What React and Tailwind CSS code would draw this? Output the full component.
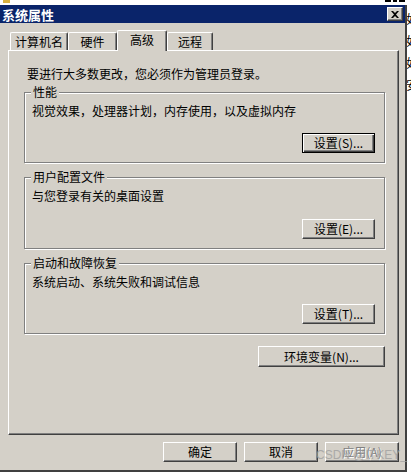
import React from "react";

const FONT = { fontFamily: '"SimSun","Noto Sans CJK SC","Noto Sans",sans-serif' };

function Btn({ children, w = "w-[73px]", def = false, disabled = false }) {
  return (
    <div
      className={
        "h-[20px] flex items-center justify-center text-[12px] leading-none bg-[#D4D0C8] " +
        w +
        " " +
        (def
          ? "border border-black shadow-[inset_1px_1px_0_#fff,inset_-1px_-1px_0_#404040,inset_-2px_-2px_0_#808080]"
          : "border border-t-white border-l-white border-r-[#404040] border-b-[#404040] shadow-[inset_-1px_-1px_0_#808080]") +
        (disabled ? " text-[#808080]" : " text-black")
      }
    >
      <span className={disabled ? "[text-shadow:1px_1px_0_#fff]" : ""}>{children}</span>
    </div>
  );
}

function Group({ label, desc, btn, h, def }) {
  return (
    <div
      className={
        "relative w-[361px] border border-[#808080] shadow-[inset_1px_1px_0_#fff,1px_1px_0_#fff] flex flex-col " +
        h
      }
    >
      <div className="absolute left-[6px] top-[-8px] px-[2px] bg-[#D4D0C8] text-[12px] leading-[14px] text-black">
        {label}
      </div>
      <div className="pl-[7px] pt-[10px] text-[12px] leading-[16px] text-black">{desc}</div>
      <div className="mt-auto pb-[9px] pr-[9px] flex justify-end">
        <Btn def={def}>{btn}</Btn>
      </div>
    </div>
  );
}

function Tab({ children, w, sel }) {
  return (
    <div
      className={
        "flex items-center justify-center text-[12px] text-black bg-[#D4D0C8] rounded-t-[2px] border-t border-l border-t-white border-l-white border-r border-r-[#404040] shadow-[inset_-1px_0_0_#808080] " +
        w +
        (sel ? " h-[21px] -mb-px relative z-10 pb-[3px]" : " h-[18px]")
      }
    >
      {children}
    </div>
  );
}

export default function App() {
  return (
    <div className="w-[411px] h-[473px] bg-white overflow-hidden flex flex-col relative" style={FONT}>
      {/* strip above window */}
      <div className="h-[5px] flex items-start relative">
        <div className="ml-[3px] w-[7px] h-[3px] bg-[#D8B040]" />
        <div className="ml-auto mr-[6px] flex gap-[2px]">
          <div className="w-[6px] h-[2px] bg-black" />
          <div className="w-[4px] h-[2px] bg-black" />
          <div className="w-[6px] h-[2px] bg-black" />
        </div>
      </div>
      <div className="flex flex-1">
        {/* window */}
        <div className="w-[407px] h-[467px] bg-[#D4D0C8] border-r-2 border-b-2 border-[#404040] flex flex-col">
          {/* title bar */}
          <div className="h-[18px] bg-[#0A246A] flex items-center pl-[2px]">
            <span className="text-white font-bold text-[13px] leading-none">系统属性</span>
            <div className="ml-auto mr-[2px] w-[16px] h-[14px] bg-[#D4D0C8] border border-t-white border-l-white border-r-[#404040] border-b-[#404040] shadow-[inset_-1px_-1px_0_#808080] flex items-center justify-center">
              <svg width="8" height="7" viewBox="0 0 8 7">
                <path d="M0 0h2l2 2 2-2h2L5 3.5 8 7H6L4 5 2 7H0l3-3.5z" fill="#000" />
              </svg>
            </div>
          </div>
          {/* tabs */}
          <div className="mt-[7px] h-[20px] pl-[10px] flex items-end">
            <Tab w="w-[58px]">计算机名</Tab>
            <Tab w="w-[49px]">硬件</Tab>
            <Tab w="w-[50px]" sel>
              高级
            </Tab>
            <Tab w="w-[46px]">远程</Tab>
          </div>
          {/* panel */}
          <div className="ml-[8px] w-[391px] h-[385px] border border-t-white border-l-white border-r-[#404040] border-b-[#404040] shadow-[inset_-1px_-1px_0_#808080] flex flex-col pl-[15px]">
            <div className="mt-[15px] pl-[3px] text-[12px] leading-[16px] text-black">
              要进行大多数更改，您必须作为管理员登录。
            </div>
            <div className="mt-[10px]">
              <Group h="h-[71px]" label="性能" desc="视觉效果，处理器计划，内存使用，以及虚拟内存" btn="设置(S)..." def />
            </div>
            <div className="mt-[14px]">
              <Group h="h-[72px]" label="用户配置文件" desc="与您登录有关的桌面设置" btn="设置(E)..." />
            </div>
            <div className="mt-[14px]">
              <Group h="h-[71px]" label="启动和故障恢复" desc="系统启动、系统失败和调试信息" btn="设置(T)..." />
            </div>
            <div className="mt-[12px] w-[361px] flex justify-end">
              <Btn w="w-[127px] !h-[21px]">环境变量(N)...</Btn>
            </div>
          </div>
          {/* bottom buttons */}
          <div className="mt-[7px] pl-[163px] flex gap-[7px]">
            <Btn w="w-[74px]">确定</Btn>
            <Btn w="w-[74px]">取消</Btn>
            <Btn w="w-[74px]" disabled>
              应用(A)
            </Btn>
          </div>
        </div>
        {/* right strip with clipped glyphs of window behind */}
        <div className="w-[4px] overflow-hidden relative">
          <div className="absolute left-[-1px] top-[3px] text-[12px] leading-[22px] text-black">
            <div>如</div>
            <div>如</div>
            <div>如</div>
            <div>安</div>
          </div>
        </div>
      </div>
      {/* watermark */}
      <div
        className="absolute left-[316px] top-[447px] whitespace-nowrap text-[12px] leading-[16px] text-[#a0a0a0] opacity-80"
        style={{ fontFamily: '"Liberation Sans",sans-serif' }}
      >
        CSDN @ITKEY_
      </div>
    </div>
  );
}
